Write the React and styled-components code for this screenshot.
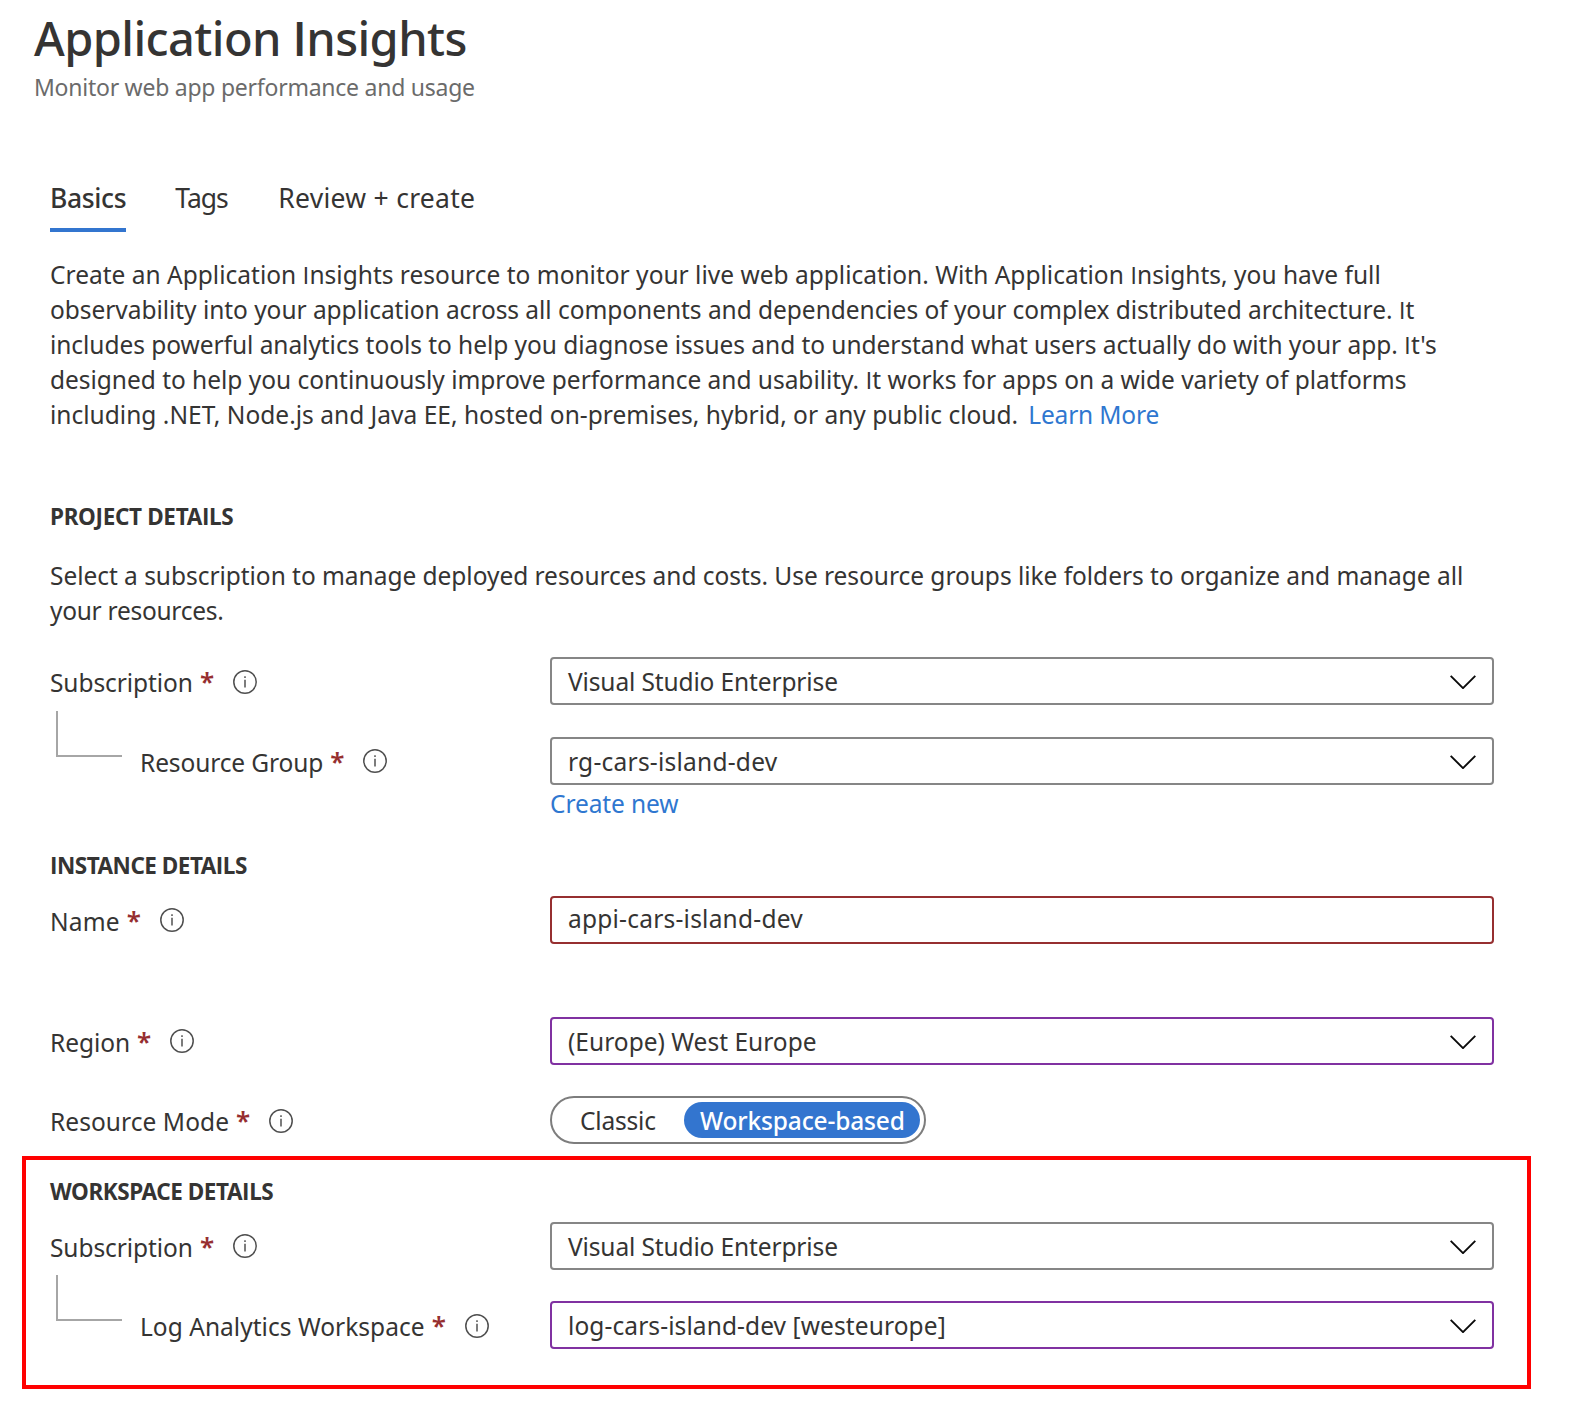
import React from "react";
import styled, { createGlobalStyle } from "styled-components";

const color = {
  text: "#353433",
  muted: "#6b6b6b",
  link: "#2f77d0",
  accent: "#3375cf",
  border: "#868686",
  error: "#962f30",
  edited: "#8031a1",
  rule: "#a6a6a6",
};

const GlobalStyle = createGlobalStyle`
  body {
    margin: 0;
    background: #fff;
    color: ${color.text};
    font-family: "Noto Sans", "Open Sans", sans-serif;
    font-size: 24.5px;
  }
  *, *::before, *::after { box-sizing: border-box; }
  h1, h2, p { margin: 0; }
`;

const Page = styled.main`
  width: 1580px;
  height: 1415px;
  padding-top: 8px;
  overflow: hidden;
  background: #fff;
`;

const Header = styled.header`
  padding-left: 34px;
`;

const Title = styled.h1`
  font-size: 47px;
  line-height: 60px;
  font-weight: 500;
`;

const Subtitle = styled.p`
  margin-top: 3px;
  font-size: 23px;
  line-height: 32px;
  color: ${color.muted};
`;

const Content = styled.div`
  padding-left: 50px;
`;

const Tabs = styled.nav`
  display: flex;
  gap: 49px;
  margin-top: 77px;
`;

const Tab = styled.a`
  min-width: ${(p) => p.$width}px;
  height: 52px;
  font-size: 26.5px;
  line-height: 36px;
  white-space: nowrap;
  font-weight: ${(p) => (p.$active ? 500 : 400)};
  border-bottom: 4px solid ${(p) => (p.$active ? color.accent : "transparent")};
`;

const Paragraph = styled.p`
  margin-top: ${(p) => p.$gap}px;
  line-height: 35px;
`;

const Line = styled.span`
  display: block;
  white-space: nowrap;
`;

const Tracked = styled.span`
  letter-spacing: ${(p) => p.$ls}px;
  white-space: nowrap;
`;

const PlainI = styled.span`
  font-family: "Open Sans", sans-serif;
  font-weight: ${(p) => p.$weight};
`;

const Link = styled.a`
  color: ${color.link};
  margin-left: ${(p) => p.$indent || 0}px;
`;

const SectionTitle = styled.h2`
  margin-top: ${(p) => p.$gap}px;
  font-size: 22.5px;
  line-height: 31px;
  font-weight: 700;
`;

const Row = styled.div`
  display: flex;
  align-items: flex-start;
  height: 48px;
  margin-top: ${(p) => p.$gap}px;
`;

const LabelCell = styled.div`
  display: flex;
  align-items: flex-start;
  flex: 0 0 500px;
`;

const Label = styled.label`
  line-height: 51px;
`;

const Required = styled.span`
  margin: 0 19px 0 7px;
  width: 14px;
  color: ${color.error};
  font-size: 26px;
  font-weight: 600;
  line-height: 48px;
`;

const InfoSvg = styled.svg`
  flex: none;
  margin-top: ${(p) => (p.$low ? 13 : 12)}px;
`;

const Connector = styled.div`
  flex: none;
  width: 66px;
  height: 46px;
  margin: -26px 18px 0 6px;
  border-left: 2px solid ${color.rule};
  border-bottom: 2px solid ${color.rule};
`;

const Field = styled.div`
  display: flex;
  align-items: flex-start;
  justify-content: space-between;
  width: 944px;
  height: 48px;
  padding: 0 16px;
  border: 2px solid ${(p) => color[p.$tone || "border"]};
  border-radius: 4px;
`;

const FieldText = styled.span`
  line-height: ${(p) => (p.$raised ? 41 : 45)}px;
`;

const ChevronSvg = styled.svg`
  flex: none;
  margin-top: 15.5px;
`;

const FieldNote = styled.div`
  margin: 1px 0 0 500px;
  line-height: 35px;
  height: 34px;
`;

const Toggle = styled.div`
  display: flex;
  width: 376px;
  height: 48px;
  padding: 4px;
  border: 2px solid #7d7d7d;
  border-radius: 24px;
`;

const Option = styled.button`
  flex: 0 0 ${(p) => p.$width}px;
  height: 36px;
  padding: 0 0 0 ${(p) => p.$pad}px;
  border: 0;
  border-radius: 18px;
  text-align: left;
  font: inherit;
  line-height: 35px;
  font-weight: ${(p) => (p.$on ? 500 : 400)};
  color: ${(p) => (p.$on ? "#fff" : color.text)};
  background: ${(p) => (p.$on ? color.accent : "transparent")};
`;

const Highlight = styled.section`
  width: 1509px;
  height: 233px;
  margin: 12px 0 0 22px;
  padding: 0 0 0 24px;
  border: 4px solid #ff0000;
`;

// The capital I is set in Open Sans, whose glyph has no crossbars.
function T({ children, ls = 0, weight = 400 }) {
  return (
    <Tracked $ls={ls}>
      {children.split(/(I)/).map((part, i) =>
        part === "I" ? (
          <PlainI key={i} $weight={weight}>
            I
          </PlainI>
        ) : (
          part
        )
      )}
    </Tracked>
  );
}

function Info({ low }) {
  return (
    <InfoSvg $low={low} width="24" height="24" viewBox="0 0 24 24" fill="none">
      <circle cx="12" cy="12" r="11.2" stroke="#4f4f4f" strokeWidth="1.5" />
      <path d="M12 6.3v1.7M12 9.8v7.8" stroke="#5c5c5c" strokeWidth="1.6" />
    </InfoSvg>
  );
}

function Chevron() {
  return (
    <ChevronSvg width="26" height="14" viewBox="0 0 26 14" fill="none">
      <path d="M.7 .9L13 13.1L25.3 .9" stroke="#0b0b0b" strokeWidth="1.9" />
    </ChevronSvg>
  );
}

function FormRow({ gap, label, ls, low, child, children }) {
  return (
    <Row $gap={gap}>
      <LabelCell>
        {child && <Connector />}
        <Label>
          <T ls={ls}>{label}</T>
        </Label>
        <Required>*</Required>
        <Info low={low} />
      </LabelCell>
      {children}
    </Row>
  );
}

function Select({ value, ls, tone }) {
  return (
    <Field $tone={tone}>
      <FieldText>
        <T ls={ls}>{value}</T>
      </FieldText>
      <Chevron />
    </Field>
  );
}

const intro = [
  ["Create an Application Insights resource to monitor your live web application. With Application Insights, you have full", 0.008],
  ["observability into your application across all components and dependencies of your complex distributed architecture. It", -0.044],
  ["includes powerful analytics tools to help you diagnose issues and to understand what users actually do with your app. It's", -0.05],
  ["designed to help you continuously improve performance and usability. It works for apps on a wide variety of platforms", -0.027],
];

export default function App() {
  return (
    <Page>
      <GlobalStyle />
      <Header>
        <Title>
          <T ls={-0.58} weight={600}>Application Insights</T>
        </Title>
        <Subtitle>
          <T ls={-0.25}>Monitor web app performance and usage</T>
        </Subtitle>
      </Header>

      <Content>
        <Tabs>
          <Tab $active $width={76}>
            <T ls={-0.35}>Basics</T>
          </Tab>
          <Tab $width={54}>
            <T ls={-1}>Tags</T>
          </Tab>
          <Tab>
            <T ls={0.27}>Review + create</T>
          </Tab>
        </Tabs>

        <Paragraph $gap={25}>
          {intro.map(([text, ls]) => (
            <Line key={text}>
              <T ls={ls}>{text}</T>
            </Line>
          ))}
          <Line>
            <T ls={0.015}>
              including .NET, Node.js and Java EE, hosted on-premises, hybrid, or any public cloud.
            </T>
            <Link $indent={10}>
              <T ls={-0.159}>Learn More</T>
            </Link>
          </Line>
        </Paragraph>

        <SectionTitle $gap={69}>
          <T ls={-0.33} weight={700}>PROJECT DETAILS</T>
        </SectionTitle>
        <Paragraph $gap={26}>
          <Line>
            <T ls={-0.039}>
              Select a subscription to manage deployed resources and costs. Use resource groups like folders to organize and manage all
            </T>
          </Line>
          <Line>
            <T ls={-0.279}>your resources.</T>
          </Line>
        </Paragraph>

        <FormRow gap={29} label="Subscription" ls={-0.077} low>
          <Select value="Visual Studio Enterprise" ls={-0.13} />
        </FormRow>
        <FormRow gap={32} label="Resource Group" ls={-0.113} child>
          <Select value="rg-cars-island-dev" ls={0.238} />
        </FormRow>
        <FieldNote>
          <Link>
            <T ls={-0.1}>Create new</T>
          </Link>
        </FieldNote>

        <SectionTitle $gap={30}>
          <T ls={-0.5} weight={700}>INSTANCE DETAILS</T>
        </SectionTitle>
        <FormRow gap={15} label="Name" ls={0.14}>
          <Field $tone="error">
            <FieldText $raised>
              <T ls={0.225}>appi-cars-island-dev</T>
            </FieldText>
          </Field>
        </FormRow>
        <FormRow gap={73} label="Region" ls={-0.06}>
          <Select value="(Europe) West Europe" ls={0.014} tone="edited" />
        </FormRow>
        <FormRow gap={31} label="Resource Mode" ls={0.06} low>
          <Toggle>
            <Option $width={128} $pad={24}>
              <T ls={-0.186}>Classic</T>
            </Option>
            <Option $on $width={236} $pad={16}>
              <T ls={-0.148}>Workspace-based</T>
            </Option>
          </Toggle>
        </FormRow>
      </Content>

      <Highlight>
        <SectionTitle $gap={16}>
          <T ls={-0.445} weight={700}>WORKSPACE DETAILS</T>
        </SectionTitle>
        <FormRow gap={15} label="Subscription" ls={-0.077}>
          <Select value="Visual Studio Enterprise" ls={-0.13} />
        </FormRow>
        <FormRow gap={31} label="Log Analytics Workspace" ls={0.03} child low>
          <Select value="log-cars-island-dev [westeurope]" ls={0.092} tone="edited" />
        </FormRow>
      </Highlight>
    </Page>
  );
}
